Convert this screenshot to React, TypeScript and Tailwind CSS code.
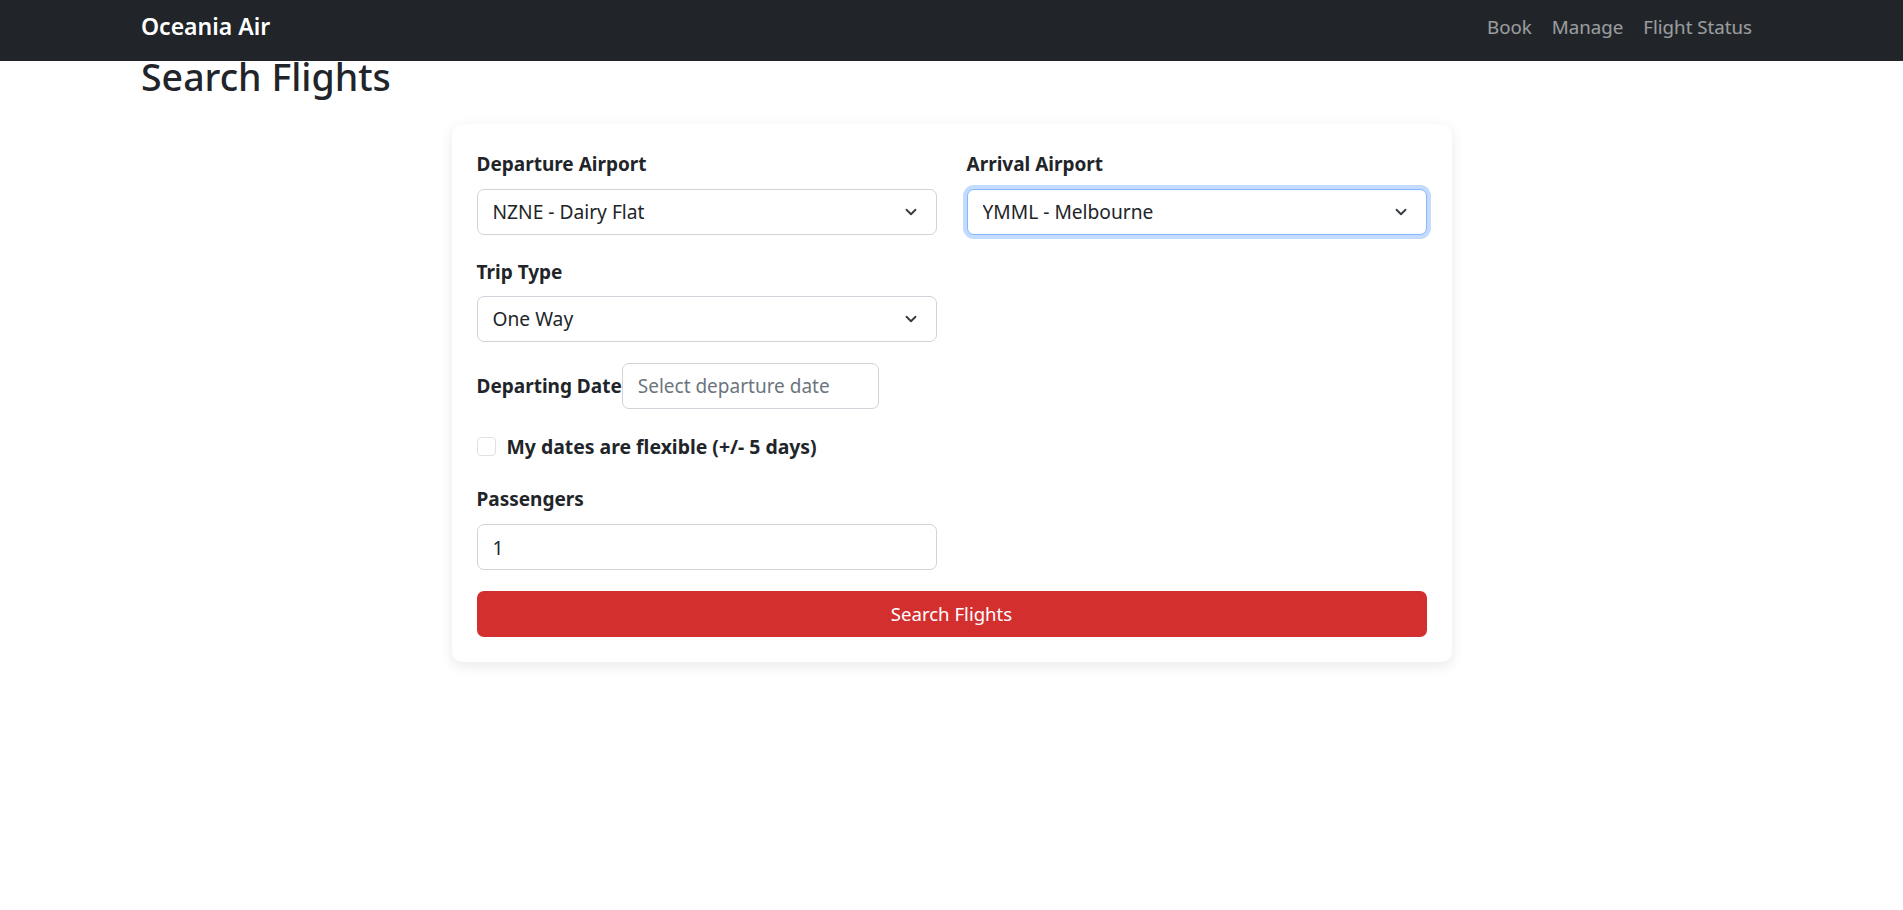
import { ChevronDown } from "lucide-react";

const airports = ["NZNE - Dairy Flat", "YMML - Melbourne", "NZAA - Auckland", "NZWN - Wellington"];

function Select({ value, options, focused }: { value: string; options: string[]; focused?: boolean }) {
  return (
    <div className="relative">
      <select
        defaultValue={value}
        className={`w-full h-[46px] appearance-none rounded-[7px] border bg-white pl-[15px] pr-[40px] text-[19.2px] text-[#212529] outline-none ${
          focused ? "border-[#86b7fe] ring-[4px] ring-[#0d6efd]/25" : "border-[#ced4da]"
        }`}
      >
        {options.map((o) => (
          <option key={o}>{o}</option>
        ))}
      </select>
      <ChevronDown
        className="pointer-events-none absolute right-[17px] top-1/2 -translate-y-1/2 w-[18px] h-[18px] text-[#343a40]"
        strokeWidth={2.4}
      />
    </div>
  );
}

export default function App() {
  return (
    <div className="min-h-screen bg-white text-[#212529] font-['Noto_Sans',sans-serif]">
      <nav className="h-[61px] bg-[#212529] flex items-center justify-between pb-[9px] px-[141px]">
        <span className="text-white text-[23px] font-semibold leading-[30px]">Oceania Air</span>
        <ul className="flex items-center text-[18.7px] leading-[28px] text-white/55 pt-[2px]">
          <li className="px-[10px]">Book</li>
          <li className="px-[10px]">Manage</li>
          <li className="px-[10px]">Flight Status</li>
        </ul>
      </nav>

      <main className="px-[141px]">
        <h2 className="text-[37.5px] font-medium leading-[31px]">Search Flights</h2>

        <div className="mx-auto mt-[32px] w-[1000px] rounded-[10px] bg-white p-[25px] shadow-[0_4px_14px_rgba(0,0,0,0.09)]">
          <div className="grid grid-cols-2 gap-x-[30px]">
            <div>
              <label className="block font-bold text-[19px] leading-[29px] mt-[1px] mb-[10px]">Departure Airport</label>
              <Select value="NZNE - Dairy Flat" options={airports} />
            </div>
            <div>
              <label className="block font-bold text-[19px] leading-[29px] mt-[1px] mb-[10px]">Arrival Airport</label>
              <Select value="YMML - Melbourne" options={airports} focused />
            </div>

            <div className="mt-[23px]">
              <label className="block font-bold text-[19px] leading-[29px] mb-[9px]">Trip Type</label>
              <Select value="One Way" options={["One Way", "Return"]} />
            </div>
          </div>

          <div className="mt-[21px] flex items-center">
            <label className="font-bold text-[19px] leading-[29px]">Departing Date</label>
            <input
              placeholder="Select departure date"
              className="h-[46px] w-[257px] rounded-[7px] border border-[#ced4da] px-[15px] text-[19px] placeholder:text-[#6c757d] outline-none"
            />
          </div>

          <div className="mt-[23px] flex items-center h-[29px]">
            <input type="checkbox" className="appearance-none w-[19px] h-[19px] rounded-[4px] border border-[#dee2e6] bg-white" />
            <label className="ml-[11px] font-bold text-[19.4px] leading-[29px]">My dates are flexible (+/- 5 days)</label>
          </div>

          <div className="mt-[24px] w-[460px]">
            <label className="block font-bold text-[19px] leading-[29px] mb-[10px]">Passengers</label>
            <input
              type="number"
              defaultValue={1}
              className="w-full h-[46px] rounded-[7px] border border-[#ced4da] px-[15px] text-[19.2px] outline-none"
            />
          </div>

          <button className="mt-[21px] w-full h-[46px] rounded-[7px] bg-[#d32f2f] text-white text-[18.6px]">
            Search Flights
          </button>
        </div>
      </main>
    </div>
  );
}
